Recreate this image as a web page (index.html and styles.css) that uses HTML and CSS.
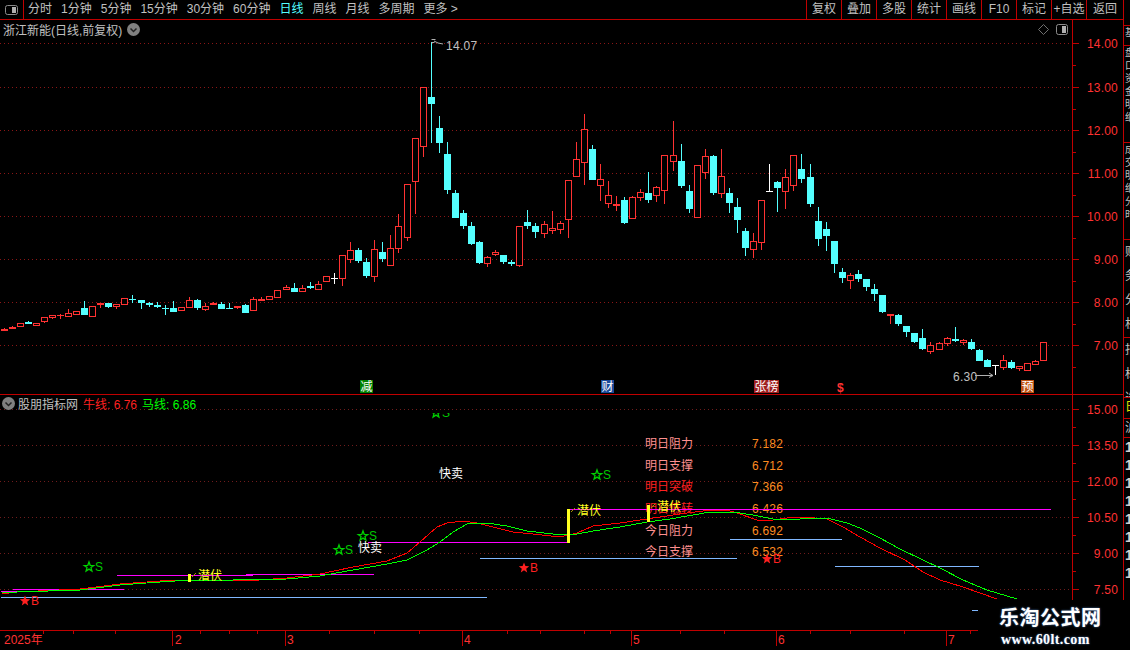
FILE: index.html
```html
<!DOCTYPE html>
<html lang="zh">
<head>
    <meta charset="UTF-8">
    <title>浙江新能 日线</title>
    <link rel="stylesheet" href="styles.css">
</head>
<body>
<div class="app">
    <div class="main">
        <!-- Top toolbar -->
        <div class="toolbar">
            <div class="layout-btn">
                <svg class="layout-icon" width="13" height="10" viewBox="0 0 13 10"><rect x="0.5" y="0.5" width="12" height="9" rx="2"></rect><rect class="layout-fill" x="7" y="2" width="4" height="6"></rect></svg>
            </div>
            <div class="periods">
                <span>分时</span>
                <span>1分钟</span>
                <span>5分钟</span>
                <span>15分钟</span>
                <span>30分钟</span>
                <span>60分钟</span>
                <span class="active">日线</span>
                <span>周线</span>
                <span>月线</span>
                <span>多周期</span>
                <span>更多 &gt;</span>
            </div>
            <div class="tools">
                <span>复权</span>
                <span>叠加</span>
                <span>多股</span>
                <span>统计</span>
                <span>画线</span>
                <span>F10</span>
                <span>标记</span>
                <span>+自选</span>
                <span>返回</span>
            </div>
        </div>

        <!-- Price chart -->
        <div class="panel price-panel">
            <div class="plot">
                <svg id="priceChart" class="chart" width="1072" height="374" viewBox="0 20 1072 374"></svg>
                <div class="panel-head">
                    <span class="stock-name">浙江新能(日线,前复权)</span>
                    <svg class="chevron" width="13" height="13" viewBox="0 0 13 13"><circle cx="6.5" cy="6.5" r="6.5"></circle><path d="M3.5 5.5l3 3 3-3"></path></svg>
                    <span class="head-icons">
                        <svg class="diamond" width="11" height="11" viewBox="0 0 11 11"><path d="M5.5 0.5l5 5-5 5-5-5z"></path></svg>
                        <svg class="layout-icon" width="13" height="11" viewBox="0 0 13 11"><rect x="0.5" y="0.5" width="11" height="10" rx="2"></rect><rect class="layout-fill" x="6" y="2" width="4" height="7"></rect></svg>
                    </span>
                </div>
            </div>
            <svg id="priceScale" class="scale" width="50" height="374" viewBox="1073 20 50 374"></svg>
        </div>

        <!-- Indicator chart -->
        <div class="panel indicator-panel">
            <div class="plot">
                <svg id="indicatorChart" class="chart" width="1072" height="235" viewBox="0 395 1072 235"></svg>
                <div class="panel-head indicator-head">
                    <svg class="chevron" width="13" height="13" viewBox="0 0 13 13"><circle cx="6.5" cy="6.5" r="6.5"></circle><path d="M3.5 5.5l3 3 3-3"></path></svg>
                    <span class="indicator-name">股朋指标网</span>
                    <span class="legend-red">牛线: 6.76</span>
                    <span class="legend-green">马线: 6.86</span>
                </div>
            </div>
            <svg id="indicatorScale" class="scale" width="50" height="235" viewBox="1073 395 50 235"></svg>
        </div>

        <svg id="dateAxis" class="date-axis" width="1123" height="15" viewBox="0 631 1123 15"></svg>

        <!-- Tabs under the date axis, only their top shows -->
        <div class="bottom-tabs">
            <span style="width:43px">指标</span>
            <span style="width:30px">模板</span>
            <span style="width:42px">MACD</span>
            <span style="width:29px">DMI</span>
            <span style="width:33px">DMA</span>
            <span style="width:30px">FSL</span>
            <span style="width:34px">TRIX</span>
            <span style="width:41px">BRAR</span>
            <span style="width:26px">CR</span>
            <span style="width:24px">VR</span>
            <span style="width:32px">OBV</span>
            <span style="width:26px">RSI</span>
            <span style="width:32px">KDJ</span>
            <span style="width:40px">更多</span>
        </div>
    </div>

    <!-- Side strip, cut off by the window edge -->
    <div class="side">
        <div class="side-cell" style="height:20px">基</div>
        <div class="side-cell" style="height:97px">盘口资金明细</div>
        <div class="side-cell" style="height:97px">成交明细分时</div>
        <div class="side-cell side-wide" style="height:98px">财务分析</div>
        <div class="side-cell side-wide" style="height:60px">指标选</div>
        <div class="side-cell side-short side-yellow" style="height:21px">日</div>
        <div class="side-cell side-short" style="height:19px">沪</div>
        <div class="side-cell side-num">11111111</div>
    </div>

    <div class="watermark">
        <div class="watermark-name">乐淘公式网</div>
        <div class="watermark-url">www.60lt.com</div>
    </div>
</div>
<script src="chart.js"></script>
</body>
</html>
```

FILE: styles.css
```css
* {
    box-sizing: border-box;
}

body {
    margin: 0;
    background-color: #000;
    color: #c0c0c0;
    font-family: "Liberation Sans", "Noto Sans CJK SC", sans-serif;
    font-size: 12px;
}

.app {
    position: relative;
    display: flex;
    width: 1130px;
    height: 650px;
    overflow: hidden;
}

.main {
    width: 1123px;
    flex: none;
}

/* Toolbar */
.toolbar {
    display: flex;
    height: 20px;
    border-bottom: 1px solid #c00000;
    line-height: 19px;
}

.layout-btn {
    display: flex;
    align-items: center;
    justify-content: center;
    width: 24px;
    border-right: 1px solid #c00000;
    padding-right: 1px;
}

.layout-icon rect {
    fill: none;
    stroke: #8c8c8c;
}

.layout-icon .layout-fill {
    fill: #b0b0b0;
    stroke: none;
}

.periods {
    display: flex;
    gap: 9px;
    padding-left: 4px;
}

.periods .active {
    color: #54ffff;
}

.tools {
    display: flex;
    margin-left: auto;
}

.tools span {
    width: 35px;
    border-left: 1px solid #c00000;
    text-align: center;
}

.tools span:last-child {
    width: 37px;
}

/* Panels */
.panel {
    display: flex;
    border-bottom: 1px solid #c00000;
}

.price-panel {
    height: 375px;
}

.indicator-panel {
    height: 236px;
}

.plot {
    position: relative;
    width: 1073px;
    border-right: 1px solid #c00000;
}

.chart,
.scale {
    display: block;
}

.panel-head {
    position: absolute;
    top: 1px;
    left: 3px;
    right: 3px;
    display: flex;
    align-items: center;
    height: 17px;
}

.stock-name {
    margin-right: 5px;
}

.chevron circle {
    fill: #808080;
}

.chevron path {
    fill: none;
    stroke: #222;
    stroke-width: 1.5;
}

.head-icons {
    display: flex;
    align-items: center;
    gap: 7px;
    margin-left: auto;
}

.diamond path {
    fill: none;
    stroke: #707070;
}

.indicator-head {
    left: 2px;
    top: 0;
}

.indicator-name {
    margin-left: 3px;
    margin-right: 5px;
}

.legend-red {
    margin-right: 5px;
    color: #ff2020;
}

.legend-green {
    color: #00ff00;
}

/* Chart drawing */
.chart line,
.chart rect,
.chart polyline,
.scale line,
.date-axis line {
    shape-rendering: crispEdges;
}

.grid {
    stroke: #8a1616;
    stroke-dasharray: 1 3;
}

.grid-low {
    stroke: #701c1c;
    stroke-dasharray: 1 3;
}

.wick-red {
    stroke: #ff3232;
}

.wick-cyan {
    stroke: #54ffff;
}

.wick-white {
    stroke: #fff;
}

.body-hollow {
    fill: #000;
    stroke: #ff3232;
}

.body-red {
    fill: #ff3232;
}

.body-cyan {
    fill: #54ffff;
}

.note {
    fill: #c0c0c0;
    font-size: 12px;
    letter-spacing: 0.3px;
}

.note-line {
    fill: none;
    stroke: #b0b0b0;
}

.tag {
    fill: #fff;
    font-size: 12px;
}

.tag-money {
    fill: #ff3232;
    font-size: 12px;
    font-weight: bold;
}

.axis-line {
    stroke: #c00000;
}

.scale-label {
    fill: #ff3232;
    font-size: 12px;
    letter-spacing: 0.2px;
    text-anchor: end;
}

.date-label {
    fill: #ff3232;
    font-size: 12px;
}

.curve {
    fill: none;
}

.curve-red {
    stroke: #ff0000;
}

.curve-green {
    stroke: #00ff00;
}

.level-magenta {
    stroke: #ff00ff;
}

.level-blue {
    stroke: #80b8ff;
}

.bar-yellow {
    fill: #ffff20;
}

.tick-yellow {
    stroke: #a89000;
}

.text-yellow {
    fill: #ffff20;
    font-size: 12px;
}

.text-white {
    fill: #fff;
    font-size: 12px;
}

.text-pink {
    fill: #ff9090;
    font-size: 12px;
}

.text-red {
    fill: #ff2020;
    font-size: 12px;
}

.text-orange {
    fill: #ff8c20;
    font-size: 12px;
    letter-spacing: 0.2px;
}

.star-hollow {
    fill: none;
    stroke: #00d000;
    stroke-width: 1.3;
}

.star-red {
    fill: #ff2020;
}

.letter-green {
    fill: #00c800;
    font-size: 12px;
}

.letter-red {
    fill: #ff2020;
    font-size: 12px;
}

/* Bottom */
.bottom-tabs {
    display: flex;
    height: 4px;
    padding-top: 1px;
    overflow: hidden;
}

.bottom-tabs span {
    flex: none;
    padding-left: 6px;
    border-right: 1px solid #c00000;
    line-height: 16px;
}

/* Side strip */
.side {
    flex: 1;
    padding-top: 25px;
    border-left: 1px solid #c00000;
    overflow: hidden;
}

.side-cell {
    width: 12px;
    padding-left: 1px;
    border-top: 1px solid #c00000;
    font-size: 10px;
    line-height: 13px;
    overflow: hidden;
    word-break: break-all;
}

.side-wide {
    font-size: 12px;
    line-height: 24px;
}

.side-short {
    font-size: 12px;
    line-height: 19px;
}

.side-yellow {
    color: #e0e000;
}

.side-num {
    height: 170px;
    font-size: 14px;
    font-weight: bold;
    line-height: 18px;
    color: #d0d0d0;
}

/* Watermark */
.watermark {
    position: absolute;
    left: 978px;
    top: 600px;
    width: 152px;
    height: 50px;
    padding-top: 5px;
    padding-left: 21px;
    background-color: #000;
}

.watermark-name {
    font-size: 20px;
    font-weight: bold;
    line-height: 27px;
    letter-spacing: 0.5px;
    color: #fff;
    text-shadow: 0 0 2px #5080c0;
}

.watermark-url {
    margin-left: 2px;
    font-family: "Liberation Serif", serif;
    font-size: 14px;
    font-weight: bold;
    line-height: 16px;
    letter-spacing: 0.4px;
    color: #fff;
    text-shadow: 0 0 2px #5080c0;
}
```

FILE: chart.js
```js
const SVG_NS = 'http://www.w3.org/2000/svg';

// Candles in page pixels: x, high, body top, body bottom, low, kind
// r = hollow red, t = solid red, c = cyan, w = white cross
const candles = [
    [4,328,329,331,331,'t'],[12,326,327,329,329,'t'],[20,323,323,327,327,'r'],[28,321,322,324,324,'c'],
    [36,323,323,326,326,'r'],[44,317,317,322,323,'r'],[52,315,315,318,319,'r'],[60,314,315,316,319,'t'],
    [68,309,313,317,317,'r'],[76,311,311,315,315,'r'],[84,301,308,315,315,'c'],[92,306,306,317,317,'r'],
    [100,303,303,305,308,'r'],[108,303,303,307,308,'c'],[116,304,304,307,309,'r'],[124,298,298,305,305,'r'],
    [132,295,299,300,303,'c'],[141,300,300,303,309,'c'],[149,302,303,305,307,'c'],[157,302,305,307,308,'c'],
    [165,305,308,309,315,'c'],[173,301,308,312,312,'c'],[181,307,307,311,311,'r'],[189,297,300,308,308,'r'],
    [197,299,300,308,310,'c'],[205,303,306,310,311,'r'],[213,302,303,305,305,'r'],[221,302,304,309,309,'c'],
    [229,303,308,309,309,'c'],[237,306,306,308,309,'r'],[245,304,305,313,313,'c'],[253,297,299,311,311,'r'],
    [261,297,299,301,301,'t'],[269,296,296,300,300,'r'],[277,290,290,298,298,'r'],[286,285,287,290,290,'r'],
    [294,283,288,292,292,'c'],[302,285,288,292,292,'r'],[310,282,286,288,289,'c'],[318,281,284,290,290,'r'],
    [326,276,276,282,282,'r'],[334,273,278,279,284,'w'],[342,255,255,279,286,'r'],[350,242,250,260,263,'r'],
    [358,248,250,261,263,'c'],[366,258,262,276,278,'c'],[374,240,249,277,282,'r'],[382,242,252,259,262,'c'],
    [390,235,248,266,266,'r'],[398,214,226,249,253,'r'],[407,184,184,238,241,'r'],[415,138,138,182,214,'r'],
    [423,87,87,147,157,'r'],[431,42,97,104,143,'c'],[439,116,128,143,153,'c'],[447,142,154,190,194,'c'],
    [455,190,193,218,218,'c'],[463,210,213,226,229,'c'],[471,222,226,244,245,'c'],[479,241,242,263,264,'c'],
    [487,256,257,264,267,'r'],[495,250,252,255,256,'r'],[503,255,255,262,264,'c'],[511,260,262,264,266,'c'],
    [519,226,226,266,267,'r'],[527,210,222,226,229,'c'],[535,223,226,232,238,'c'],[544,221,224,234,238,'r'],
    [552,211,228,231,234,'r'],[560,221,223,230,234,'r'],[568,180,180,220,238,'r'],[576,142,159,177,177,'r'],
    [584,114,129,163,185,'r'],[592,145,149,180,180,'c'],[600,164,179,186,201,'r'],[608,181,195,204,208,'r'],
    [616,196,204,206,211,'t'],[624,197,200,223,224,'c'],[632,196,197,219,219,'r'],[640,189,192,198,201,'r'],
    [648,172,193,200,203,'c'],[656,186,187,196,202,'r'],[664,155,155,191,204,'r'],[673,121,155,162,171,'r'],
    [681,144,161,186,188,'c'],[689,185,191,209,213,'c'],[697,165,165,218,218,'r'],[705,149,156,173,179,'r'],
    [713,155,156,193,195,'c'],[721,149,176,194,198,'r'],[729,188,193,203,213,'c'],[737,198,207,220,233,'c'],
    [745,228,231,248,256,'c'],[753,233,241,250,258,'r'],[761,200,200,243,250,'r'],[769,164,191,192,192,'w'],
    [777,181,182,188,212,'c'],[785,169,177,192,209,'r'],[793,155,155,186,191,'r'],[801,154,169,179,183,'c'],
    [810,164,177,204,207,'c'],[818,207,221,239,246,'c'],[826,222,229,236,251,'c'],[834,241,241,264,273,'c'],
    [842,268,272,278,283,'c'],[850,273,275,281,289,'r'],[858,270,274,279,282,'c'],[866,279,279,287,291,'c'],
    [874,284,289,294,301,'c'],[882,295,295,312,313,'c'],[890,314,314,316,324,'t'],[898,314,315,324,326,'c'],
    [906,326,326,332,337,'c'],[914,333,333,342,343,'c'],[922,329,338,349,350,'c'],[930,342,345,352,354,'r'],
    [939,342,343,350,350,'r'],[947,337,338,344,346,'r'],[955,327,339,341,342,'c'],[963,339,340,343,345,'r'],
    [971,339,342,349,350,'c'],[979,349,350,361,361,'c'],[987,359,360,367,367,'c'],[995,365,365,366,375,'w'],
    [1003,355,360,368,370,'r'],[1011,360,362,368,369,'c'],[1019,366,366,369,371,'r'],[1027,363,363,371,371,'r'],
    [1035,360,361,365,365,'r'],[1043,342,342,361,361,'r']
];

const redCurve = [
    [2,594],[17,592],[80,589],[120,584],[160,581],[190,580],[233,580],[245,581],[287,578],[320,574],[353,567],
    [387,561],[407,553],[420,542],[437,527],[447,523],[463,521],[477,523],[497,528],[513,532],[533,534],[560,537],
    [577,533],[593,526],[620,523],[640,520],[660,517],[687,513],[703,511],[727,510],[737,513],[757,520],[773,520],
    [787,518],[803,517],[827,519],[843,527],[860,537],[880,548],[905,560],[923,572],[940,580],[963,587],[980,593],[997,599]
];

const greenCurve = [
    [2,593],[17,592],[80,590],[120,585],[160,582],[190,580],[233,580],[287,579],[320,576],[353,570],[387,564],
    [407,560],[427,550],[440,542],[453,532],[467,524],[487,523],[507,526],[527,531],[553,534],[577,534],[593,531],
    [620,527],[647,522],[670,519],[693,515],[710,512],[733,512],[753,515],[773,519],[800,519],[827,518],[847,523],
    [860,528],[880,538],[900,549],[923,560],[940,568],[963,580],[987,590],[1017,599]
];

// Support and resistance levels: x1, x2, y, class
const levels = [
    [1,20,591,'level-magenta'],[13,124,589,'level-magenta'],[117,253,575,'level-magenta'],
    [246,374,574,'level-magenta'],[368,568,542,'level-magenta'],[568,1051,509,'level-magenta'],
    [1,487,597,'level-blue'],[480,737,558,'level-blue'],[730,842,539,'level-blue'],
    [835,979,566,'level-blue'],[972,978,610,'level-blue']
];

const forecast = [
    ['明日阻力','7.182',448,'text-pink'],['明日支撑','6.712',470,'text-pink'],['明日突破','7.366',491,'text-red'],
    ['明日低转','6.426',513,'text-red'],['今日阻力','6.692',535,'text-pink'],['今日支撑','6.532',556,'text-pink']
];

const priceTicks = [[14,43],[13,87],[12,130],[11,173],[10,216],[9,259],[8,302],[7,345]];
const indicatorTicks = [['15.00',409],['13.50',445],['12.00',481],['10.50',517],['9.00',553],['7.50',589]];
const dateLabels = [['2025年',4,null],['2',175,172],['3',287,285],['4',464,462],['5',633,631],['6',778,776],['7',948,946]];
const dateTicks = [43,73,115,200,229,257,329,374,419,507,540,584,610,680,724,810,850,904,970];

function add(parent, tag, attrs, text) {
    const el = document.createElementNS(SVG_NS, tag);
    for (const name in attrs) {
        el.setAttribute(name, attrs[name]);
    }
    if (text) {
        el.textContent = text;
    }
    parent.appendChild(el);
    return el;
}

function hLine(svg, x1, x2, y, cls) {
    add(svg, 'line', { x1: x1, x2: x2, y1: y + 0.5, y2: y + 0.5, class: cls });
}

function vLine(svg, x, y1, y2, cls) {
    add(svg, 'line', { x1: x + 0.5, x2: x + 0.5, y1: y1, y2: y2, class: cls });
}

function drawCandle(svg, c) {
    const x = c[0], high = c[1], top = c[2], bottom = c[3], low = c[4], kind = c[5];
    if (kind === 'w') {
        vLine(svg, x, high, low, 'wick-white');
        hLine(svg, x - 3, x + 4, top, 'wick-white');
    } else if (kind === 'r') {
        vLine(svg, x, high, top, 'wick-red');
        vLine(svg, x, bottom, low, 'wick-red');
        add(svg, 'rect', { x: x - 2.5, y: top + 0.5, width: 6, height: bottom - top - 1, class: 'body-hollow' });
    } else {
        vLine(svg, x, high, low, kind === 'c' ? 'wick-cyan' : 'wick-red');
        add(svg, 'rect', { x: x - 3, y: top, width: 7, height: bottom - top, class: kind === 'c' ? 'body-cyan' : 'body-red' });
    }
}

function drawTag(svg, x, width, color, label) {
    add(svg, 'rect', { x: x, y: 380, width: width, height: 13, fill: color });
    add(svg, 'text', { x: x + 0.5, y: 391, class: 'tag' }, label);
}

function starPoints(cx, cy, r) {
    const points = [];
    for (let i = 0; i < 10; i++) {
        const radius = i % 2 === 0 ? r : r * 0.42;
        const angle = -Math.PI / 2 + i * Math.PI / 5;
        points.push((cx + radius * Math.cos(angle)).toFixed(1) + ',' + (cy + radius * Math.sin(angle)).toFixed(1));
    }
    return points.join(' ');
}

function drawSell(svg, cx, cy) {
    add(svg, 'polygon', { points: starPoints(cx, cy, 5), class: 'star-hollow' });
    add(svg, 'text', { x: cx + 6, y: cy + 4, class: 'letter-green' }, 'S');
}

function drawBuy(svg, cx, cy) {
    add(svg, 'polygon', { points: starPoints(cx, cy, 5.5), class: 'star-red' });
    add(svg, 'text', { x: cx + 6, y: cy + 4, class: 'letter-red' }, 'B');
}

function drawHidden(svg, barX, barTop, barBottom, textX, textY) {
    add(svg, 'rect', { x: barX, y: barTop, width: 3, height: barBottom - barTop, class: 'bar-yellow' });
    add(svg, 'line', { x1: barX + 4, y1: barTop + 3, x2: barX + 8, y2: barTop - 1, class: 'tick-yellow' });
    add(svg, 'text', { x: textX, y: textY, class: 'text-yellow' }, '潜伏');
}

function drawPriceChart() {
    const svg = document.getElementById('priceChart');
    priceTicks.forEach(function (t) {
        hLine(svg, 0, 1072, t[1], 'grid');
    });
    candles.forEach(function (c) {
        drawCandle(svg, c);
    });

    // High and low notes
    add(svg, 'path', { d: 'M431.5 39.5h4M431.5 42.5h3M434 41l4 2 5 1', class: 'note-line' });
    add(svg, 'text', { x: 446, y: 50, class: 'note' }, '14.07');
    add(svg, 'text', { x: 953, y: 381, class: 'note' }, '6.30');
    add(svg, 'path', { d: 'M975 375.5h18M989 373l4 2.5-4 2', class: 'note-line' });

    // Event tags above the panel edge
    drawTag(svg, 360, 13, '#008000', '减');
    drawTag(svg, 601, 13, '#1a4a9a', '财');
    drawTag(svg, 754, 25, '#a02020', '张榜');
    add(svg, 'text', { x: 837, y: 392, class: 'tag-money' }, '$');
    drawTag(svg, 1021, 13, '#c05010', '预');
}

function drawIndicatorChart() {
    const svg = document.getElementById('indicatorChart');
    indicatorTicks.forEach(function (t) {
        hLine(svg, 0, 1072, t[1], 'grid-low');
    });

    forecast.forEach(function (f) {
        add(svg, 'text', { x: 645, y: f[2], class: f[3] }, f[0]);
        add(svg, 'text', { x: 752, y: f[2], class: 'text-orange' }, f[1]);
    });

    levels.forEach(function (l) {
        hLine(svg, l[0], l[1], l[2], l[3]);
    });

    add(svg, 'polyline', { points: redCurve.join(' '), class: 'curve curve-red' });
    add(svg, 'polyline', { points: greenCurve.join(' '), class: 'curve curve-green' });

    drawHidden(svg, 188, 574, 582, 198, 580);
    drawHidden(svg, 567, 509, 543, 577, 515);
    drawHidden(svg, 647, 505, 522, 657, 511);

    add(svg, 'text', { x: 439, y: 478, class: 'text-white' }, '快卖');
    add(svg, 'text', { x: 358, y: 552, class: 'text-white' }, '快卖');

    drawSell(svg, 89, 567);
    drawSell(svg, 339, 550);
    drawSell(svg, 363, 536);
    drawSell(svg, 597, 475);

    // This one runs off the top of the visible range
    const clip = add(add(svg, 'clipPath', { id: 'rangeClip' }), 'rect', { x: 0, y: 413, width: 1072, height: 217 });
    clip.setAttribute('fill', '#fff');
    drawSell(add(svg, 'g', { 'clip-path': 'url(#rangeClip)' }), 436, 413);

    drawBuy(svg, 25, 601);
    drawBuy(svg, 524, 568);
    drawBuy(svg, 767, 559);
}

function drawScales() {
    const priceScale = document.getElementById('priceScale');
    priceTicks.forEach(function (t) {
        hLine(priceScale, 1073, 1079, t[1], 'axis-line');
        hLine(priceScale, 1073, 1076, t[1] + 22, 'axis-line');
        add(priceScale, 'text', { x: 1118, y: t[1] + 5, class: 'scale-label' }, t[0].toFixed(2));
    });

    const indicatorScale = document.getElementById('indicatorScale');
    indicatorTicks.forEach(function (t) {
        hLine(indicatorScale, 1073, 1079, t[1], 'axis-line');
        hLine(indicatorScale, 1073, 1076, t[1] + 18, 'axis-line');
        add(indicatorScale, 'text', { x: 1118, y: t[1] + 5, class: 'scale-label' }, t[0]);
    });

    const dateAxis = document.getElementById('dateAxis');
    dateTicks.forEach(function (x) {
        vLine(dateAxis, x, 631, 634, 'axis-line');
    });
    dateLabels.forEach(function (d) {
        if (d[2]) {
            vLine(dateAxis, d[2], 631, 646, 'axis-line');
        }
        add(dateAxis, 'text', { x: d[1], y: 644, class: 'date-label' }, d[0]);
    });
}

drawPriceChart();
drawIndicatorChart();
drawScales();
```
